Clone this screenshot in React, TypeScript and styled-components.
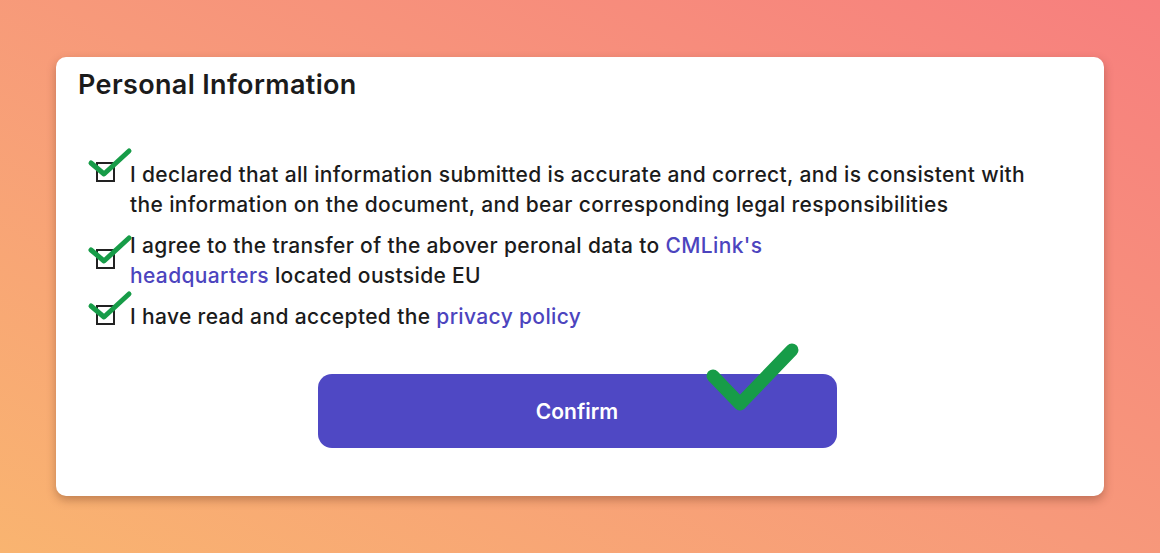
import React from 'react'
import styled, { createGlobalStyle } from 'styled-components'

const GlobalStyle = createGlobalStyle`
  html, body {
    margin: 0;
    padding: 0;
  }
  body {
    font-family: Inter, "Noto Sans", sans-serif;
    color: #1b1b1b;
  }
`

const Page = styled.main`
  min-height: 100vh;
  box-sizing: border-box;
  display: flex;
  align-items: center;
  justify-content: center;
  background: linear-gradient(28deg, #f9b470 0%, #f7997a 50%, #f77f7e 100%);
`

const Card = styled.section`
  width: 1048px;
  height: 439px;
  box-sizing: border-box;
  padding: 12px 22px 0;
  background: #fff;
  border-radius: 10px;
  box-shadow: 0 4px 10px rgba(90, 40, 20, 0.35);
  display: flex;
  flex-direction: column;
`

const Title = styled.h2`
  margin: 0;
  font-size: 27px;
  line-height: 32px;
  font-weight: 600;
  letter-spacing: 0.35px;
  color: #1b1b1b;
`

const List = styled.ul`
  list-style: none;
  margin: 59px 0 0;
  padding: 0 0 0 18px;
  display: flex;
  flex-direction: column;
  gap: 11px;
`

type ItemProps = {
  $align: 'top' | 'center'
}

const Item = styled.li<ItemProps>`
  display: flex;
  align-items: ${({ $align }) => ($align === 'top' ? 'flex-start' : 'center')};
  gap: 15px;
  font-size: 21px;
  line-height: 30px;
  font-weight: 500;
  letter-spacing: 0.35px;
`

const Text = styled.span`
  max-width: 920px;
`

const Box = styled.span<ItemProps>`
  position: relative;
  flex: none;
  width: 19px;
  height: 20px;
  box-sizing: border-box;
  border: 2px solid #222;
  margin-top: ${({ $align }) => ($align === 'top' ? '2px' : '0')};
  transform: translateY(${({ $align }) => ($align === 'top' ? '0' : '-2px')});
`

const SmallCheck = styled.svg`
  position: absolute;
  left: -10px;
  top: -17px;
  width: 44px;
  height: 34px;
  overflow: visible;
`

const Link = styled.a`
  color: #4c44be;
  text-decoration: none;
`

const ButtonRow = styled.div`
  display: flex;
  justify-content: center;
  margin-top: 42px;
  padding-right: 6px;
`

const ButtonWrap = styled.div`
  position: relative;
`

const ConfirmButton = styled.button`
  width: 519px;
  height: 74px;
  border: none;
  border-radius: 14px;
  background: #4f48c4;
  color: #fff;
  font-family: Inter, "Noto Sans", sans-serif;
  font-size: 21px;
  font-weight: 600;
  cursor: pointer;
`

const BigCheck = styled.svg`
  position: absolute;
  left: 380px;
  top: -40px;
  width: 110px;
  height: 90px;
  overflow: visible;
  pointer-events: none;
`

const Tick = () => (
  <SmallCheck viewBox="0 0 44 34">
    <path
      d="M3 16 L16 27 L41 4"
      fill="none"
      stroke="#179c48"
      strokeWidth="5"
      strokeLinecap="round"
      strokeLinejoin="round"
    />
  </SmallCheck>
)

const items: { align: 'top' | 'center'; content: React.ReactNode }[] = [
  {
    align: 'top',
    content: (
      <>
        I declared that all information submitted is accurate and correct, and is consistent with
        the information on the document, and bear corresponding legal responsibilities
      </>
    ),
  },
  {
    align: 'center',
    content: (
      <>
        I agree to the transfer of the abover peronal data to <Link href="#">CMLink's</Link>
        <br />
        <Link href="#">headquarters</Link> located oustside EU
      </>
    ),
  },
  {
    align: 'center',
    content: (
      <>
        I have read and accepted the <Link href="#">privacy policy</Link>
      </>
    ),
  },
]

function App(): React.ReactElement {
  return (
    <>
      <GlobalStyle />
      <Page>
        <Card>
          <Title>Personal Information</Title>
          <List>
            {items.map((item, i) => (
              <Item key={i} $align={item.align}>
                <Box $align={item.align}>
                  <Tick />
                </Box>
                <Text>{item.content}</Text>
              </Item>
            ))}
          </List>
          <ButtonRow>
            <ButtonWrap>
              <ConfirmButton>Confirm</ConfirmButton>
              <BigCheck viewBox="0 0 110 90">
                <path
                  d="M15 42 L42 70 L94 16"
                  fill="none"
                  stroke="#179c48"
                  strokeWidth="13"
                  strokeLinecap="round"
                  strokeLinejoin="round"
                />
              </BigCheck>
            </ButtonWrap>
          </ButtonRow>
        </Card>
      </Page>
    </>
  )
}

export default App
